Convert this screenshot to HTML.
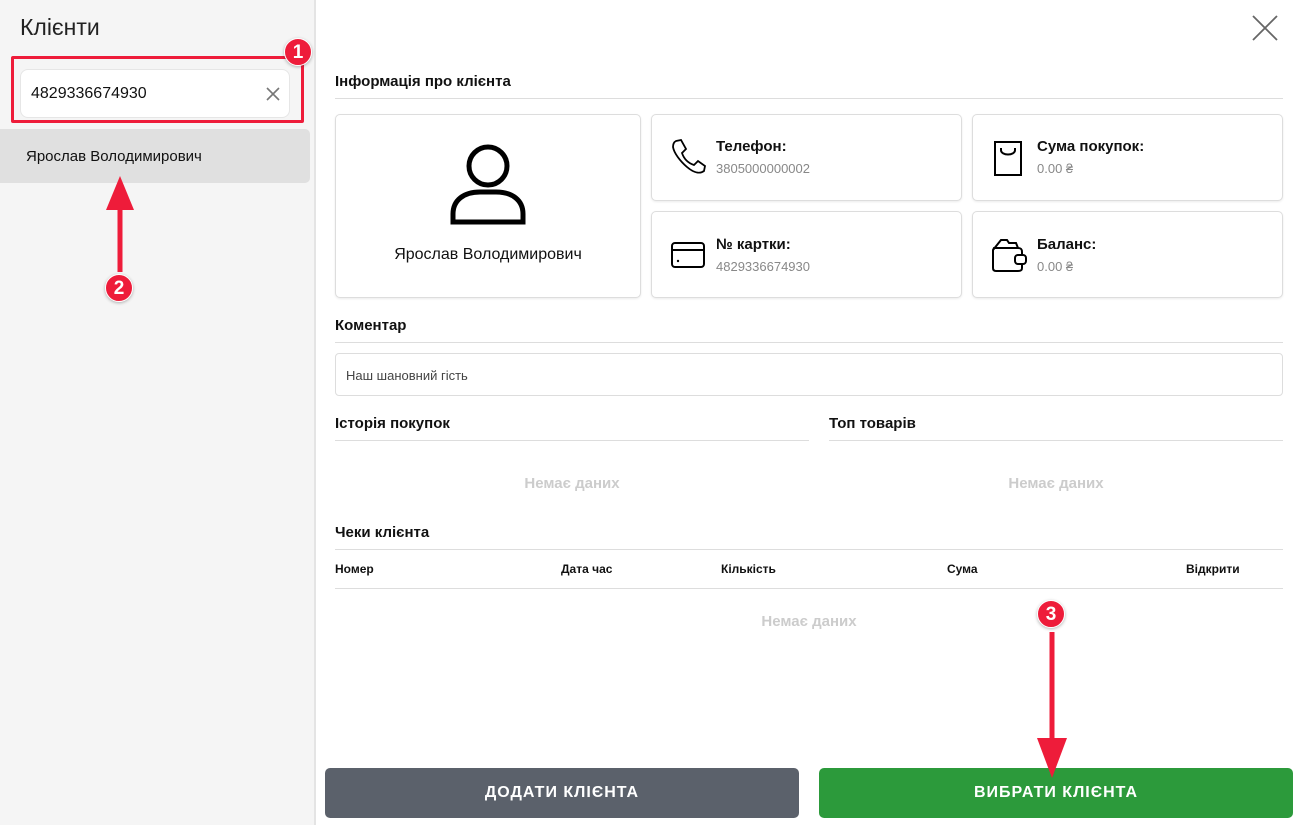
<!DOCTYPE html>
<html><head><meta charset="utf-8"><style>
*{box-sizing:border-box;margin:0;padding:0}
body{width:1301px;height:825px;overflow:hidden;background:#fff;font-family:"Liberation Sans",Arial,sans-serif;position:relative;color:#111}
.abs{position:absolute}
.side{left:0;top:0;width:316px;height:825px;background:#f5f5f5;border-right:2px solid #e4e4e4}
.h{font-weight:bold;font-size:15px}
.line{height:1px;background:#ddd}
.card{background:#fff;border:1px solid #ddd;border-radius:5px;box-shadow:0 1px 2px rgba(0,0,0,.08)}
.lab{font-weight:bold;font-size:15px}
.val{font-size:13px;color:#888;margin-top:6px}
.nd{color:#ccc;font-size:15px;font-weight:bold;text-align:center}
.th{font-size:12px;font-weight:bold}
.badge{width:28px;height:28px;border-radius:50%;background:#ee1c3a;color:#fff;font-weight:bold;font-size:19px;text-align:center;line-height:28px;border:1px solid #fff;box-shadow:0 1px 3px rgba(0,0,0,.3)}
.btn{border-radius:5px;color:#fff;font-weight:bold;font-size:16px;letter-spacing:1px;text-align:center;line-height:50px}
</style></head><body>
<div class="abs side"></div>
<div class="abs" style="left:20px;top:14px;font-size:23px;color:#222">Клієнти</div>
<div class="abs" style="left:11px;top:56px;width:293px;height:67px;border:3px solid #ee1c3a;border-radius:2px"></div>
<div class="abs" style="left:20px;top:69px;width:270px;height:49px;background:#fff;border:1px solid #e6e6e6;border-radius:8px"></div>
<div class="abs" style="left:31px;top:85px;font-size:16px">4829336674930</div>
<svg class="abs" style="left:266px;top:87px" width="14" height="14"><path d="M1 1L13 13M13 1L1 13" stroke="#777" stroke-width="1.6"/></svg>
<div class="abs" style="left:0;top:129px;width:310px;height:54px;background:#e0e0e0;border-radius:0 5px 5px 0"></div>
<div class="abs" style="left:26px;top:148px;font-size:15px">Ярослав Володимирович</div>
<svg class="abs" style="left:100px;top:168px" width="40" height="105"><path d="M20 8L6 42H34Z" fill="#ee1c3a"/><rect x="17.5" y="38" width="5" height="66" fill="#ee1c3a"/></svg>
<div class="abs badge" style="left:105px;top:274px">2</div>
<div class="abs badge" style="left:284px;top:38px">1</div>

<svg class="abs" style="left:1252px;top:15px" width="26" height="26"><path d="M1 1L25 25M25 1L1 25" stroke="#666" stroke-width="1.8"/></svg>

<div class="abs h" style="left:335px;top:73px">Інформація про клієнта</div>
<div class="abs line" style="left:335px;top:98px;width:948px"></div>

<div class="abs card" style="left:335px;top:114px;width:306px;height:184px"></div>
<svg class="abs" style="left:450px;top:144px" width="76" height="82"><circle cx="38" cy="22" r="19" fill="none" stroke="#000" stroke-width="5"/><path d="M3 78V70C3 56 14 48 30 48H46C62 48 73 56 73 70V78Z" fill="none" stroke="#000" stroke-width="5"/></svg>
<div class="abs" style="left:335px;top:246px;width:306px;text-align:center;font-size:16px">Ярослав Володимирович</div>

<div class="abs card" style="left:651px;top:114px;width:311px;height:87px"></div>
<div class="abs card" style="left:972px;top:114px;width:311px;height:87px"></div>
<div class="abs card" style="left:651px;top:211px;width:311px;height:87px"></div>
<div class="abs card" style="left:972px;top:211px;width:311px;height:87px"></div>

<svg class="abs" style="left:670px;top:139px" width="36" height="36"><path d="M6 2L11 1L16 10L12 14C14 20 18 24 24 26L28 22L35 27L34 32C30 35 24 34 17 28C10 22 4 14 3 8C3 5 4 3 6 2Z" fill="none" stroke="#000" stroke-width="1.8"/></svg>
<div class="abs" style="left:716px;top:138px"><div class="lab">Телефон:</div><div class="val">3805000000002</div></div>

<svg class="abs" style="left:992px;top:140px" width="34" height="36"><path d="M3 2H29V35H3Z" fill="none" stroke="#000" stroke-width="2"/><path d="M9 8V10C9 16 23 16 23 10V8" fill="none" stroke="#000" stroke-width="2"/></svg>
<div class="abs" style="left:1037px;top:138px"><div class="lab">Сума покупок:</div><div class="val">0.00 ₴</div></div>

<svg class="abs" style="left:670px;top:241px" width="36" height="28"><rect x="2" y="2" width="32" height="24" rx="3" fill="none" stroke="#000" stroke-width="2"/><path d="M2 9H34" stroke="#000" stroke-width="2"/><circle cx="8" cy="20" r="1.2"/></svg>
<div class="abs" style="left:716px;top:236px"><div class="lab">№ картки:</div><div class="val">4829336674930</div></div>

<svg class="abs" style="left:990px;top:235px" width="40" height="38"><path d="M4 13H28C31 13 32 14 32 17V33C32 35 31 36 28 36H6C4 36 3 35 3 33V15Z M3 15L11 5H17L19 8H26L28 13" fill="none" stroke="#000" stroke-width="2"/><rect x="25" y="20" width="11" height="9" rx="3" fill="#fff" stroke="#000" stroke-width="2"/></svg>
<div class="abs" style="left:1037px;top:236px"><div class="lab">Баланс:</div><div class="val">0.00 ₴</div></div>

<div class="abs h" style="left:335px;top:317px">Коментар</div>
<div class="abs line" style="left:335px;top:342px;width:948px"></div>
<div class="abs" style="left:335px;top:353px;width:948px;height:43px;border:1px solid #ddd;border-radius:4px"></div>
<div class="abs" style="left:346px;top:368px;font-size:13px;color:#444">Наш шановний гість</div>

<div class="abs h" style="left:335px;top:415px">Історія покупок</div>
<div class="abs line" style="left:335px;top:440px;width:474px"></div>
<div class="abs h" style="left:829px;top:415px">Топ товарів</div>
<div class="abs line" style="left:829px;top:440px;width:454px"></div>
<div class="abs nd" style="left:335px;top:475px;width:474px">Немає даних</div>
<div class="abs nd" style="left:829px;top:475px;width:454px">Немає даних</div>

<div class="abs h" style="left:335px;top:524px">Чеки клієнта</div>
<div class="abs line" style="left:335px;top:549px;width:948px"></div>
<div class="abs th" style="left:335px;top:562px">Номер</div>
<div class="abs th" style="left:561px;top:562px">Дата час</div>
<div class="abs th" style="left:721px;top:562px">Кількість</div>
<div class="abs th" style="left:947px;top:562px">Сума</div>
<div class="abs th" style="left:1186px;top:562px">Відкрити</div>
<div class="abs line" style="left:335px;top:588px;width:948px"></div>
<div class="abs nd" style="left:335px;top:613px;width:948px">Немає даних</div>

<div class="abs btn" style="left:325px;top:768px;width:474px;height:50px;background:#5b616b">ДОДАТИ КЛІЄНТА</div>
<div class="abs btn" style="left:819px;top:768px;width:474px;height:50px;background:#2c9a3b">ВИБРАТИ КЛІЄНТА</div>

<div class="abs badge" style="left:1037px;top:600px">3</div>
<svg class="abs" style="left:1035px;top:630px" width="34" height="150"><rect x="14.5" y="2" width="5" height="110" fill="#ee1c3a"/><path d="M2 108H32L17 148Z" fill="#ee1c3a"/></svg>
</body></html>
